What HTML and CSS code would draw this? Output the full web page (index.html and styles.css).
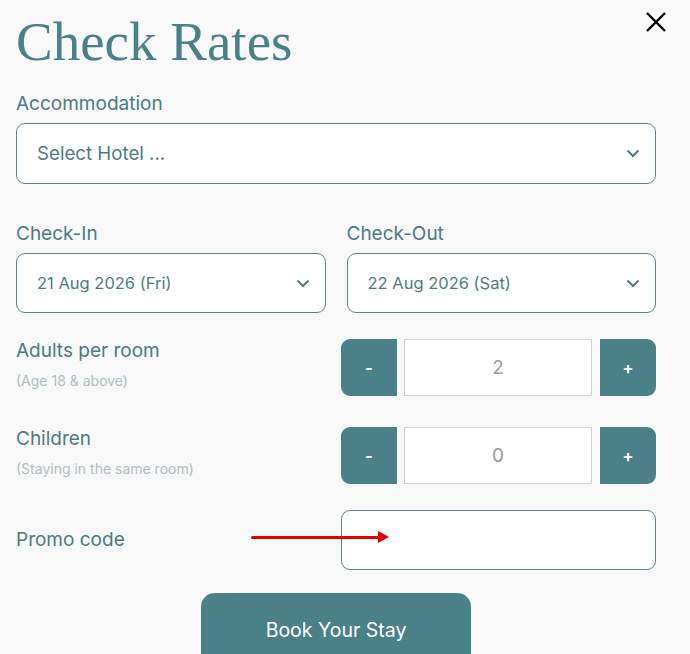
FILE: index.html
```html
<!DOCTYPE html>
<html lang="en">
  <head>
    <meta charset="UTF-8" />
    <meta name="viewport" content="width=device-width, initial-scale=1.0" />
    <title>Check Rates</title>
    <link rel="stylesheet" href="styles.css">
  </head>
  <body>
    <div class="panel">
      <button class="close" type="button" aria-label="Close">
        <svg width="22" height="22" viewBox="0 0 22 22">
          <path d="M2 2 L20 20 M20 2 L2 20" stroke="#000" stroke-width="2.4" fill="none" />
        </svg>
      </button>

      <h1 class="title">Check Rates</h1>

      <form class="rates">
        <div class="field">
          <label class="label">Accommodation</label>
          <div class="select select-big">
            <span>Select Hotel ...</span>
            <svg class="chev" width="14" height="9" viewBox="0 0 14 9"><path d="M1.5 1.5 L7 7 L12.5 1.5" /></svg>
          </div>
        </div>

        <div class="dates">
          <div class="field">
            <label class="label">Check-In</label>
            <div class="select">
              <span>21 Aug 2026 (Fri)</span>
              <svg class="chev" width="14" height="9" viewBox="0 0 14 9"><path d="M1.5 1.5 L7 7 L12.5 1.5" /></svg>
            </div>
          </div>
          <div class="field">
            <label class="label">Check-Out</label>
            <div class="select">
              <span>22 Aug 2026 (Sat)</span>
              <svg class="chev" width="14" height="9" viewBox="0 0 14 9"><path d="M1.5 1.5 L7 7 L12.5 1.5" /></svg>
            </div>
          </div>
        </div>

        <div class="row">
          <div class="row-text">
            <div class="label">Adults per room</div>
            <div class="hint">(Age 18 &amp; above)</div>
          </div>
          <div class="stepper">
            <button type="button" class="step step-minus">-</button>
            <input class="count" type="text" value="2" />
            <button type="button" class="step step-plus">+</button>
          </div>
        </div>

        <div class="row">
          <div class="row-text">
            <div class="label">Children</div>
            <div class="hint">(Staying in the same room)</div>
          </div>
          <div class="stepper">
            <button type="button" class="step step-minus">-</button>
            <input class="count" type="text" value="0" />
            <button type="button" class="step step-plus">+</button>
          </div>
        </div>

        <div class="row promo-row">
          <div class="label">Promo code</div>
          <input class="promo" type="text" />
          <div class="arrow"></div>
        </div>

        <button type="submit" class="book">Book Your Stay</button>
      </form>
    </div>
  </body>
</html>
```

FILE: styles.css
```css
html, body {
  margin: 0;
  height: 100%;
  overflow: hidden;
}

body {
  background: #f8f8f8;
  color: #4b7b82;
  font-family: Inter, "Noto Sans", sans-serif;
}

.panel {
  position: relative;
  padding: 0 34px 0 16px;
}

.close {
  position: absolute;
  top: 11px;
  right: 23px;
  padding: 0;
  border: 0;
  background: none;
  cursor: pointer;
}

.title {
  margin: 0;
  padding-top: 12px;
  font-family: "Liberation Serif", serif;
  font-weight: 400;
  font-size: 55px;
  line-height: 60px;
  color: #4a8088;
}

.rates {
  display: flex;
  flex-direction: column;
}

.field {
  display: flex;
  flex-direction: column;
}

.label {
  font-size: 19px;
  line-height: 24px;
  color: #4b7b82;
}

.field .label {
  margin-bottom: 7px;
}

.rates > .field:first-child {
  margin-top: 20px;
}

.select {
  display: flex;
  align-items: center;
  justify-content: space-between;
  box-sizing: border-box;
  height: 60px;
  padding: 0 15px 0 20px;
  background: #ffffff;
  border: 1px solid #5c858b;
  border-radius: 9px;
  font-size: 16.5px;
  color: #4b7b82;
}

.select-big {
  height: 61px;
  font-size: 18.7px;
}

.chev path {
  fill: none;
  stroke: #4b7b82;
  stroke-width: 2;
}

.dates {
  display: grid;
  grid-template-columns: 1fr 1fr;
  gap: 21px;
  margin-top: 38px;
}

.row {
  display: flex;
  align-items: flex-start;
  justify-content: space-between;
  margin-top: 26px;
}

.row + .row {
  margin-top: 31px;
}

.hint {
  margin-top: 9px;
  font-size: 14px;
  line-height: 17px;
  color: #b0bec2;
}

.stepper {
  display: flex;
  gap: 7px;
  width: 315px;
  height: 57px;
}

.step {
  width: 56px;
  flex: none;
  border: 0;
  background: #4a8088;
  color: #ffffff;
  font-family: Inter, "Noto Sans", sans-serif;
  font-size: 17px;
  font-weight: 600;
}

.step-minus {
  border-radius: 9px 0 0 9px;
}

.step-plus {
  border-radius: 0 9px 9px 0;
  margin-left: 1px;
}

.count {
  flex: 1;
  min-width: 0;
  box-sizing: border-box;
  border: 1px solid #cfcfcf;
  background: #ffffff;
  text-align: center;
  font-family: Inter, "Noto Sans", sans-serif;
  font-size: 19px;
  color: #9a9a9a;
}

.promo-row {
  position: relative;
  align-items: center;
}

.row.promo-row {
  margin-top: 26px;
}

.promo {
  width: 315px;
  height: 60px;
  box-sizing: border-box;
  border: 1px solid #5c858b;
  border-radius: 9px;
  background: #ffffff;
}

.arrow {
  position: absolute;
  left: 235px;
  top: 26px;
  width: 128px;
  height: 3px;
  background: #e50000;
  border-radius: 2px;
}

.arrow::after {
  content: "";
  position: absolute;
  right: -10px;
  top: -5px;
  border-left: 11px solid #e50000;
  border-top: 6.5px solid transparent;
  border-bottom: 6.5px solid transparent;
}

.book {
  align-self: center;
  width: 270px;
  height: 74px;
  margin-top: 23px;
  border: 0;
  border-radius: 14px;
  background: #4a8088;
  color: #ffffff;
  font-family: Inter, "Noto Sans", sans-serif;
  font-size: 19.5px;
}
```
